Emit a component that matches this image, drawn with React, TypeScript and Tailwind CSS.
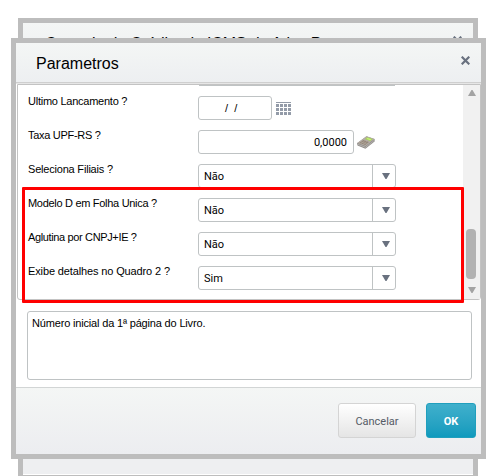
import React from "react";

const field = "h-6 rounded-[3px] border border-[#bfc3c4] bg-white";

function CloseIcon() {
  return (
    <svg width="9" height="9" viewBox="0 0 9 9" className="block">
      <path d="M.7 .7L8.3 8.3M8.3 .7L.7 8.3" stroke="#69717f" strokeWidth="2.2" />
    </svg>
  );
}

function Row({ label, tracking, children }: { label: string; tracking: string; children: React.ReactNode }) {
  return (
    <div className="flex h-[34px] shrink-0 items-start">
      <div className={`-mt-px w-[170px] whitespace-nowrap leading-[12px] ${tracking}`}>{label}</div>
      {children}
    </div>
  );
}

function Select({ value }: { value: string }) {
  return (
    <div className={`${field} flex w-[198px] font-[Roboto,sans-serif]`}>
      <span className="flex-1 pl-[5px] leading-[23px]">{value}</span>
      <span className="flex w-[23px] items-center justify-center border-l border-[#bfc3c4] pl-1">
        <svg width="8" height="6" viewBox="0 0 8 6">
          <path d="M0 0H8L4.5 6H3.5Z" fill="#69717f" />
        </svg>
      </span>
    </div>
  );
}

function CalendarIcon() {
  return (
    <svg width="15" height="13" viewBox="0 0 15 13" className="ml-1 mt-[6px]" fill="#939ba8">
      <rect width="15" height="1" />
      {[2, 6, 10].map((y) => [0, 4, 8, 12].map((x) => <rect key={`${x}-${y}`} x={x} y={y} width="3" height="3" />))}
    </svg>
  );
}

function CalculatorIcon() {
  return (
    <svg width="18" height="13" viewBox="0 0 18 13" className="ml-[3px] mt-[6px]">
      <path d="M0 7.2L9.5 .2L17.6 3V5.4L8.4 12.8L.5 9.6Z" fill="#8f8b88" />
      <path d="M.3 7L9.5 .2L17.6 3L8.6 10Z" fill="#b5aea6" />
      <path d="M2.2 7L6.3 4L12 6L8.3 9Z" fill="#93867a" />
      <path d="M7.8 3L10.3 1.2L15.8 3L13.2 5Z" fill="#a6d159" />
      <path d="M9.3 2.8L10.6 1.9L14.5 3.2L13 4.3Z" fill="#c9f27c" />
      <path d="M4 5.9L9.8 8M3.9 7.6L7.9 4.7M6 8.4L10 5.3" stroke="#b9aea2" strokeWidth=".5" />
      <path d="M.6 8.2L8.5 11.3L17.4 4.3" stroke="#cbc9c6" strokeWidth=".6" fill="none" />
    </svg>
  );
}

export default function App() {
  return (
    <main className="relative h-[476px] w-[489px] overflow-hidden bg-white pl-[18px] pt-[18px] font-['Liberation_Sans',Arial,sans-serif] text-[11px] text-black">
      <section className="flex h-[458px] w-[460px] flex-col justify-between border-x-[5px] border-t-[5px] border-[#bdbdbd] bg-[#eeeff1]">
        <header className="flex h-10 items-start justify-between bg-linear-to-b from-[#f4f6f5] to-[#edeff1] pl-[22px] pr-[11px] pt-[11px]">
          <h2 className="whitespace-nowrap text-[16px] leading-[20px] tracking-[-0.15px]">Controle de Crédito de ICMS do Ativo Permanente</h2>
          <div className="mt-[2px]"><CloseIcon /></div>
        </header>
        <div className="h-[2px] border-b border-[#bdbdbd] bg-white" />
      </section>

      <section className="absolute left-[11px] top-[38px] flex h-[421px] w-[475px] flex-col border-[5px] border-[#bdbdbd] bg-white">
        <header className="flex h-[39px] shrink-0 items-start justify-between bg-linear-to-b from-[#f4f6f5] to-[#edeff1] pl-5 pr-[11px] pt-[13px]">
          <h1 className="text-[16px] leading-[16px]">Parametros</h1>
          <CloseIcon />
        </header>
        <div className="h-[2px] shrink-0 border-b border-[#e6e6e6] bg-[#cfcfcf]" />
        <div className="ml-px flex h-[216px] shrink-0 rounded-b-[3px] border border-[#c3c3c3]">
          <div className="flex flex-1 flex-col overflow-hidden pl-[10px]">
            <div className="ml-[171px] h-px w-[196px] shrink-0 bg-[#bfc3c4]" />
            <div className="pt-[10px]">
              <Row label="Ultimo Lancamento ?" tracking="tracking-[-0.25px]">
                <div className={`${field} w-[74px] whitespace-pre pl-[26px] leading-[23px]`}>/  /</div>
                <CalendarIcon />
              </Row>
              <Row label="Taxa UPF-RS ?" tracking="tracking-[-0.3px]">
                <div className={`${field} w-[156px] pr-[6px] text-right font-[Roboto,sans-serif] leading-[23px]`}>0,0000</div>
                <CalculatorIcon />
              </Row>
              <Row label="Seleciona Filiais ?" tracking="tracking-[-0.2px]"><Select value="Não" /></Row>
              <Row label="Modelo D em Folha Unica ?" tracking="tracking-[-0.3px]"><Select value="Não" /></Row>
              <Row label="Aglutina por CNPJ+IE ?" tracking="tracking-[-0.36px]"><Select value="Não" /></Row>
              <Row label="Exibe detalhes no Quadro 2 ?" tracking="tracking-[-0.13px]"><Select value="Sim" /></Row>
            </div>
          </div>
          <div className="flex w-[17px] flex-col items-center bg-[#f1f1f1] pt-[5px]">
            <svg width="8" height="6" className="shrink-0"><path d="M0 6L3.5 0H4.5L8 6Z" fill="#a3a3a3" /></svg>
            <div className="mr-px mt-[133px] h-[50px] w-[10px] shrink-0 rounded-[4px] bg-[#b2b2b2]" />
            <svg width="8" height="6" className="mt-2 shrink-0"><path d="M0 0H8L4.5 6H3.5Z" fill="#a3a3a3" /></svg>
          </div>
        </div>
        <div className="ml-[11px] mt-[11px] h-[69px] w-[445px] shrink-0 rounded-[3px] border border-[#bfc3c4] px-[4px] pt-[5px] leading-[12px] tracking-[-0.17px]">
          Número inicial da 1ª página do Livro.
        </div>
        <footer className="mt-[7px] flex flex-1 justify-end gap-[10px] border-t border-[#d2d5d5] bg-linear-to-b from-[#f4f6f5] to-[#ecedf0] pr-[5px] pt-[15px] font-[Roboto,sans-serif]">
          <button className="h-[35px] w-[78px] rounded-[3px] border border-[#d4d4d4] bg-linear-to-b from-white to-[#e5e5e5] pt-[3px] text-[#555b66]">Cancelar</button>
          <button className="h-[35px] w-[50px] rounded-[3px] border border-[#209fbd] bg-linear-to-b from-[#3fb0cc] to-[#0e9abd] pt-[3px] font-bold text-white">OK</button>
        </footer>
      </section>
      <div className="absolute left-[22px] top-[187px] h-[116px] w-[442px] rounded-[1px] border-[3px] border-[#ff0000]" />
    </main>
  );
}
